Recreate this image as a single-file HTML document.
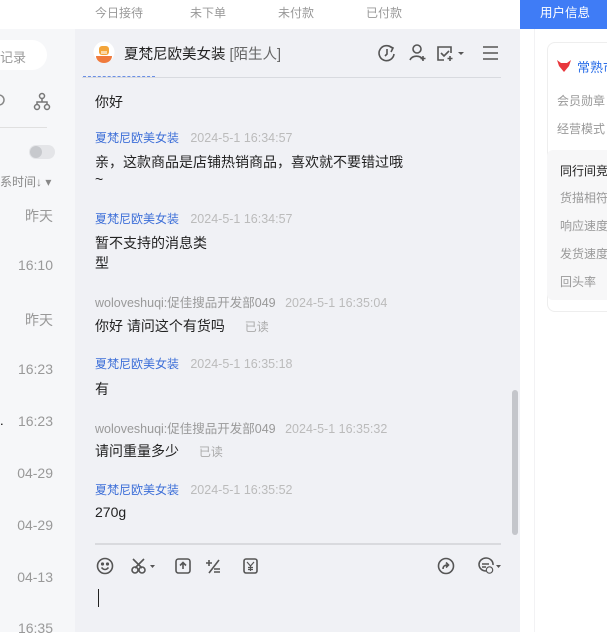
<!DOCTYPE html>
<html><head><meta charset="utf-8"><style>
*{margin:0;padding:0;box-sizing:border-box}
body{width:607px;height:632px;overflow:hidden;background:#fff;font-family:"Liberation Sans","Noto Sans CJK SC",sans-serif;position:relative}
.a{position:absolute;white-space:nowrap}
.g{color:#999;font-size:12px}
.nm{color:#3d6fd8;font-size:12px}
.tm{color:#bbb;font-size:12.5px}
.msg{color:#222;font-size:14px}
.t{color:#999;font-size:14px;right:554px;text-align:right}
</style></head><body>
<div class="a" style="left:0;top:0;width:520px;height:29px;background:#fff"></div>
<div class="a g" style="left:95px;top:4px">今日接待</div>
<div class="a g" style="left:190px;top:4px">未下单</div>
<div class="a g" style="left:278px;top:4px">未付款</div>
<div class="a g" style="left:366px;top:4px">已付款</div>
<div class="a" style="left:520px;top:0;width:87px;height:29px;background:#3f7cf6;color:#fff;font-size:12.5px;padding:2px 0 0 20px">用户信息</div>

<div class="a" style="left:0;top:29px;width:75px;height:603px;background:#f6f7f9"></div>
<div class="a" style="left:-20px;top:40px;width:67px;height:30px;background:#fff;border-radius:15px"></div>
<div class="a" style="left:0;top:47px;font-size:13px;color:#999">记录</div>
<svg class="a" style="left:0;top:92px" width="60" height="20"><circle cx="-1" cy="8" r="5" fill="none" stroke="#888" stroke-width="1.5"/><g fill="none" stroke="#777" stroke-width="1.5"><circle cx="42" cy="4" r="2.5"/><circle cx="37" cy="15" r="2.5"/><circle cx="47" cy="15" r="2.5"/><path d="M42 7v3M37 12v-2h10v2"/></g></svg>
<div class="a" style="left:0;top:127px;width:47px;height:1px;background:#e0e0e0"></div>
<div class="a" style="left:29px;top:145px;width:26px;height:14px;border-radius:7px;background:#e4e5e8"></div>
<div class="a" style="left:30px;top:146px;width:12px;height:12px;border-radius:6px;background:#c7c9cd"></div>
<div class="a" style="left:0;top:173px;font-size:12px;color:#888">系时间↓ ▾</div>
<div class="a t" style="top:206px">昨天</div>
<div class="a t" style="top:257px">16:10</div>
<div class="a t" style="top:310px">昨天</div>
<div class="a t" style="top:361px">16:23</div>
<div class="a t" style="top:413px">16:23</div>
<div class="a" style="left:0;top:413px;font-size:13px">.</div>
<div class="a t" style="top:465px">04-29</div>
<div class="a t" style="top:517px">04-29</div>
<div class="a t" style="top:569px">04-13</div>
<div class="a t" style="top:620px">16:35</div>

<div class="a" style="left:75px;top:29px;width:445px;height:603px;background:#f0f1f5"></div>
<svg class="a" style="left:93px;top:41px" width="22" height="22"><circle cx="11" cy="11" r="10.5" fill="#fff"/><path d="M3 15a8 7 0 0016 0z" fill="#f07a3c"/><rect x="6" y="5" width="10" height="9" rx="3" fill="#f3a53a"/><rect x="8" y="10" width="6" height="3" fill="#fcd9a8"/></svg>
<div class="a" style="left:124px;top:43px;font-size:14.5px;color:#222">夏梵尼欧美女装 <span style="color:#666">[陌生人]</span></div>
<svg class="a" style="left:375px;top:42px" width="130" height="22" fill="none" stroke="#555" stroke-width="1.6"><path d="M17 6a7.5 7.5 0 1 0 2 6"/><path d="M14 4l4 2-2 4"/><path d="M12 7v5l-2 2"/><circle cx="42" cy="7" r="4"/><path d="M35 18a7 6 0 0113 0M48 14v5M45.5 16.5h5"/><path d="M76 11v-6h-13v13h6"/><path d="M66 11l3 3 5-5M75 14v5M72.5 16.5h5"/><path d="M83 10h6l-3 3z" fill="#555" stroke="none"/><path d="M108 5h15M108 11h15M108 17h15"/></svg>
<div class="a" style="left:82px;top:77px;width:419px;height:1px;background:#d8dadf"></div>
<div class="a" style="left:83px;top:76px;width:72px;height:1px;border-top:1px dashed #6a8fe6"></div>
<div class="a msg" style="left:95px;top:92px">你好</div>

<div class="a nm" style="left:95px;top:129px">夏梵尼欧美女装 <span class="tm" style="margin-left:8px">2024-5-1 16:34:57</span></div>
<div class="a msg" style="left:95px;top:152px">亲，这款商品是店铺热销商品，喜欢就不要错过哦</div>
<div class="a msg" style="left:95px;top:171px">~</div>
<div class="a nm" style="left:95px;top:210px">夏梵尼欧美女装 <span class="tm" style="margin-left:8px">2024-5-1 16:34:57</span></div>
<div class="a msg" style="left:95px;top:233px">暂不支持的消息类</div>
<div class="a msg" style="left:95px;top:253px">型</div>
<div class="a" style="left:95px;top:292px;font-size:12.5px;color:#999">woloveshuqi:促佳搜品开发部049 <span class="tm" style="margin-left:6px">2024-5-1 16:35:04</span></div>
<div class="a msg" style="left:95px;top:316px">你好 请问这个有货吗 <span style="color:#aaa;font-size:12px;margin-left:16px">已读</span></div>
<div class="a nm" style="left:95px;top:355px">夏梵尼欧美女装 <span class="tm" style="margin-left:8px">2024-5-1 16:35:18</span></div>
<div class="a msg" style="left:95px;top:379px">有</div>
<div class="a" style="left:95px;top:418px;font-size:12.5px;color:#999">woloveshuqi:促佳搜品开发部049 <span class="tm" style="margin-left:6px">2024-5-1 16:35:32</span></div>
<div class="a msg" style="left:95px;top:441px">请问重量多少 <span style="color:#aaa;font-size:12px;margin-left:16px">已读</span></div>
<div class="a nm" style="left:95px;top:481px">夏梵尼欧美女装 <span class="tm" style="margin-left:8px">2024-5-1 16:35:52</span></div>
<div class="a msg" style="left:95px;top:504px">270g</div>
<div class="a" style="left:512px;top:390px;width:6px;height:145px;border-radius:3px;background:#c4c6cb"></div>
<div class="a" style="left:95px;top:543px;width:406px;height:2px;background:#d9dade"></div>
<svg class="a" style="left:95px;top:556px" width="410" height="20" fill="none" stroke="#555" stroke-width="1.6"><circle cx="10" cy="10" r="7.5"/><circle cx="7.5" cy="8" r=".8" fill="#555"/><circle cx="12.5" cy="8" r=".8" fill="#555"/><path d="M6.5 11.5q3.5 4 7 0"/><circle cx="40" cy="14" r="3"/><circle cx="47" cy="14" r="3"/><path d="M38 3l9 9M49 3l-9 9"/><path d="M55 9h5l-2.5 3z" fill="#555" stroke="none"/><rect x="81" y="3" width="14" height="14" rx="2.5"/><path d="M88 13V7M85 9.5l3-3 3 3"/><path d="M114 4v6M111 7h6M124 4l-10 13M119 13h6M119 16h6"/><rect x="149" y="3" width="13" height="14" rx="2"/><path d="M152 6l3.5 4 3.5-4M155.5 10v5M153 11.5h5M153 13.5h5" stroke-width="1.2"/><circle cx="351" cy="10" r="7.5"/><path d="M348 13q0-4 4.5-4M351 6.5l2.5 2.5-2.5 2.5"/><path d="M391 15a7 6.5 0 117-6"/><path d="M387 8h7M387 11h4"/><circle cx="394.5" cy="14" r="3.2" stroke-width="1.2"/><path d="M401 9h5l-2.5 3z" fill="#555" stroke="none"/></svg>
<div class="a" style="left:98px;top:589px;width:1px;height:18px;background:#222"></div>

<div class="a" style="left:520px;top:29px;width:87px;height:603px;background:#fff"></div>
<div class="a" style="left:534px;top:29px;width:1px;height:603px;background:#f2f2f4"></div>
<div class="a" style="left:547px;top:42px;width:70px;height:270px;border:1px solid #eee;border-radius:8px;background:#fff"></div>
<svg class="a" style="left:556px;top:59px" width="16" height="14"><path d="M1 1l4 3h6l4-3-2 6-5 6-5-6z" fill="#e8383d"/></svg>
<div class="a" style="left:577px;top:57px;font-size:13px;color:#2c6fe8">常熟市</div>
<div class="a" style="left:557px;top:92px;font-size:12px;color:#999">会员勋章</div>
<div class="a" style="left:557px;top:120px;font-size:12px;color:#999">经营模式</div>
<div class="a" style="left:547px;top:150px;width:70px;height:150px;background:#f7f7f8;border-radius:6px"></div>
<div class="a" style="left:560px;top:162px;font-size:12px;color:#222">同行间竞</div>
<div class="a" style="left:560px;top:189px;font-size:12px;color:#999">货描相符</div>
<div class="a" style="left:560px;top:217px;font-size:12px;color:#999">响应速度</div>
<div class="a" style="left:560px;top:245px;font-size:12px;color:#999">发货速度</div>
<div class="a" style="left:560px;top:273px;font-size:12px;color:#999">回头率</div>
</body></html>
